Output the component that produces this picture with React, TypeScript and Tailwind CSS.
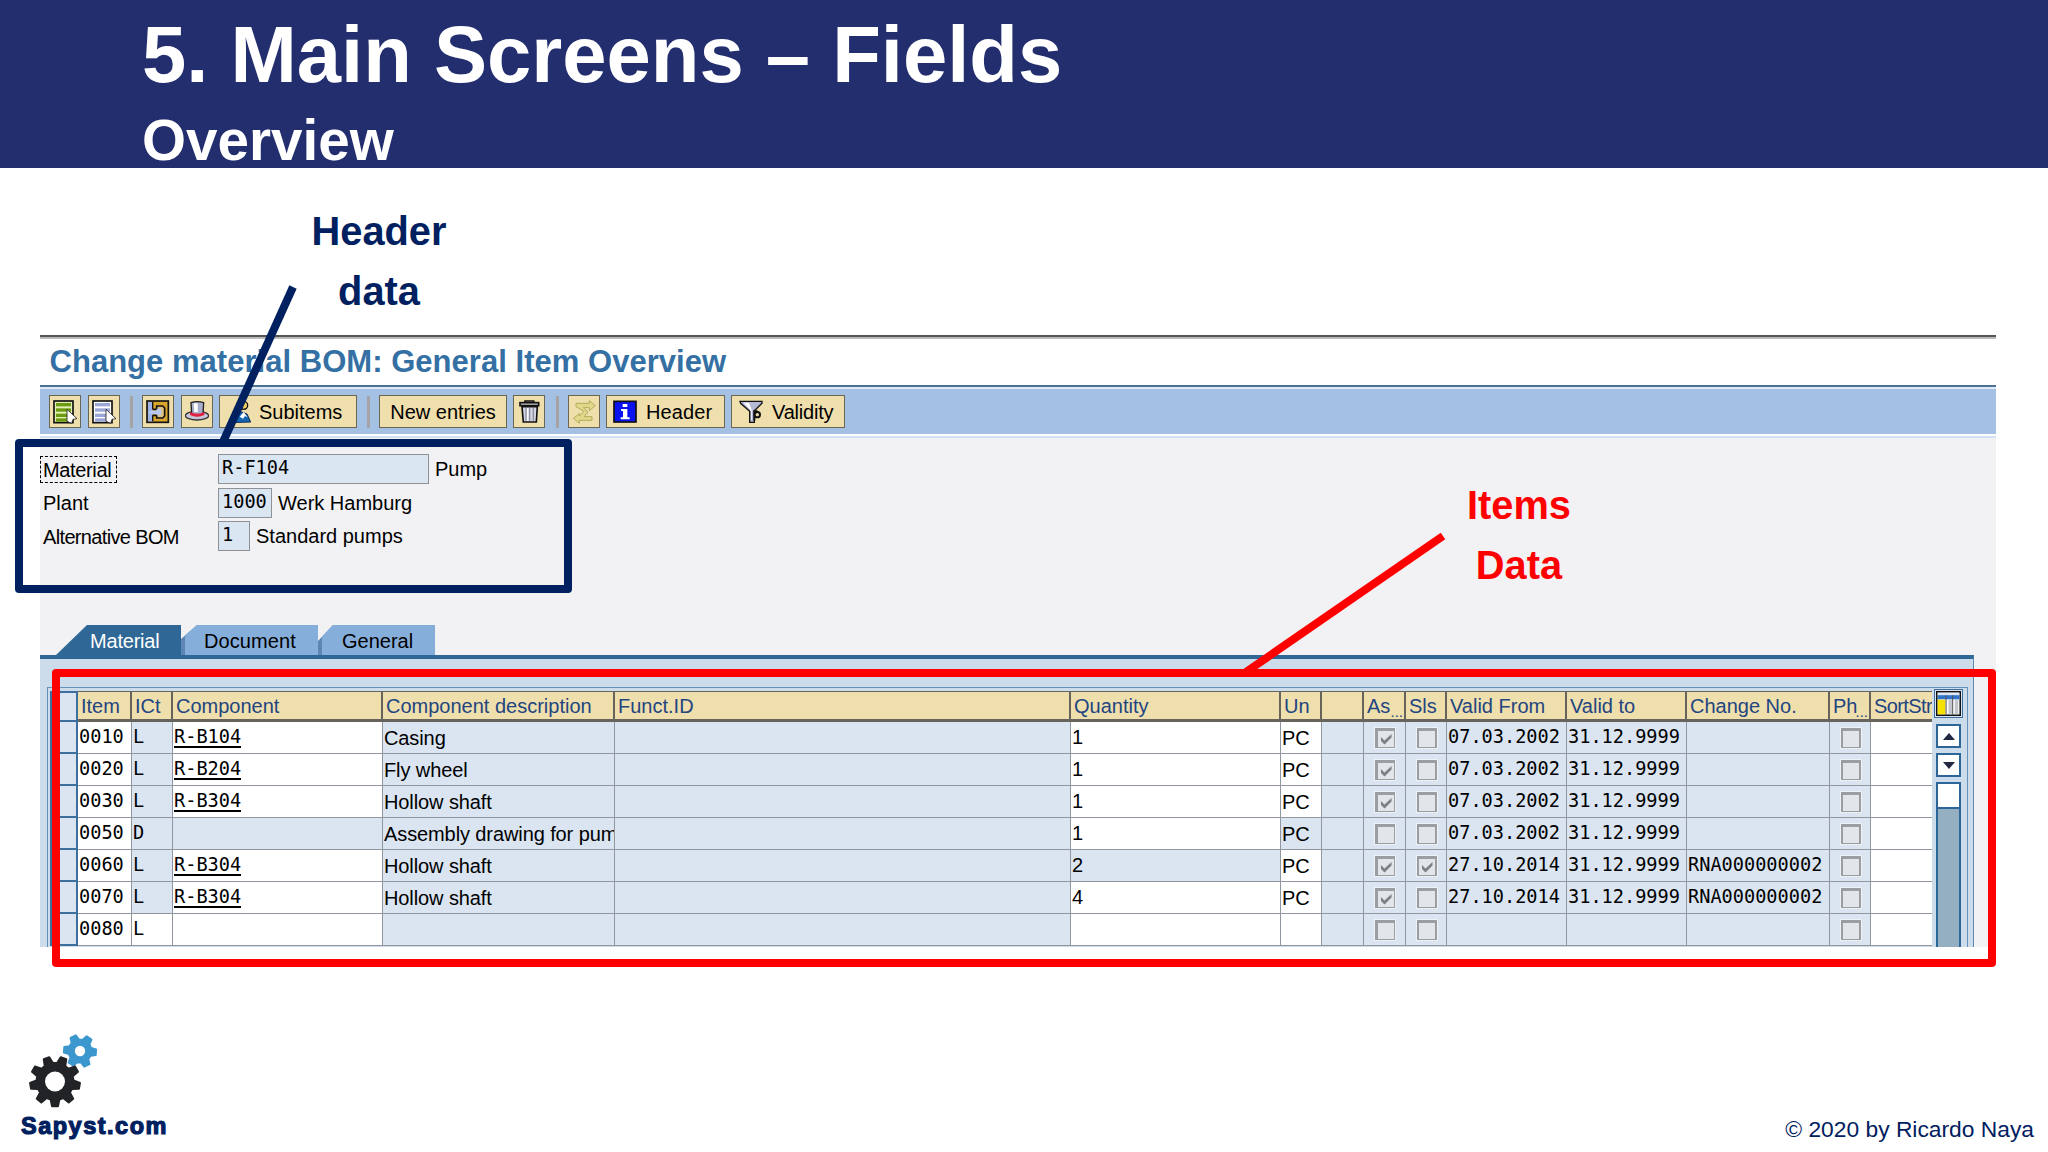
import type { ReactNode } from "react";
import clsx from "clsx";

type Row = {
    item: string;
    ict: string;
    component?: string;
    description?: string;
    quantity?: string;
    unit?: string;
    asm?: boolean;
    sls?: boolean;
    from?: string;
    to?: string;
    change?: string;
};

const ROWS: Row[] = [
    { item: "0010", ict: "L", component: "R-B104", description: "Casing", quantity: "1", unit: "PC", asm: true, from: "07.03.2002", to: "31.12.9999" },
    { item: "0020", ict: "L", component: "R-B204", description: "Fly wheel", quantity: "1", unit: "PC", asm: true, from: "07.03.2002", to: "31.12.9999" },
    { item: "0030", ict: "L", component: "R-B304", description: "Hollow shaft", quantity: "1", unit: "PC", asm: true, from: "07.03.2002", to: "31.12.9999" },
    { item: "0050", ict: "D", description: "Assembly drawing for pum", quantity: "1", unit: "PC", from: "07.03.2002", to: "31.12.9999" },
    { item: "0060", ict: "L", component: "R-B304", description: "Hollow shaft", quantity: "2", unit: "PC", asm: true, sls: true, from: "27.10.2014", to: "31.12.9999", change: "RNA000000002" },
    { item: "0070", ict: "L", component: "R-B304", description: "Hollow shaft", quantity: "4", unit: "PC", asm: true, from: "27.10.2014", to: "31.12.9999", change: "RNA000000002" },
    { item: "0080", ict: "L" },
];

const HEADERS = ["Item", "ICt", "Component", "Component description", "Funct.ID", "Quantity", "Un", "", "As", "Sls", "Valid From", "Valid to", "Change No.", "Ph", "SortStr"];

const COLS = "grid grid-cols-[28px_54px_41px_210px_232px_456px_210px_41px_42px_42px_41px_120px_120px_143px_41px_61px]";
const MONO = "font-['DejaVu_Sans_Mono',monospace] text-[18.6px]";
const MONO_CELL = "font-['DejaVu_Sans_Mono',monospace] text-[18.6px] leading-[30px]";

/* ---------- toolbar icons ---------- */

function Icon({ children }: { children: ReactNode }) {
    return (
        <svg viewBox="0 0 72 72" className="w-6 h-6 shrink-0">
            {children}
        </svg>
    );
}

function ListIcon({ bar, bg }: { bar: string; bg: string }) {
    return (
        <Icon>
            <rect x="3" y="3" width="57" height="65" fill={bg} stroke="#111" strokeWidth="5" />
            {[9, 25, 41, 55].map(y => <rect key={y} x="9" y={y} width="45" height="10" fill={bar} />)}
            <path d="M42 28 L72 56 L60 58 L56 70 L42 64 Z" fill="#fff" stroke="#222" strokeWidth="2.5" />
        </Icon>
    );
}

function DetailIcon() {
    return (
        <Icon>
            <rect x="3" y="3" width="64" height="64" fill="#d8a42c" stroke="#111" strokeWidth="5" />
            <path d="M6 6 H20 V64 H6 Z" fill="#9db4e6" />
            <path d="M20 28 H32 V18 H50 L56 24 V48 L50 54 H32 V46 H20" fill="#dfc27a" stroke="#111" strokeWidth="5" />
            <path d="M10 32 H32 V26 H46 V46 H32 V42 H10 Z" fill="#b9c8ee" />
            <path d="M20 6 V28 M20 46 V64" stroke="#111" strokeWidth="4" />
        </Icon>
    );
}

function HatIcon() {
    return (
        <Icon>
            <ellipse cx="36" cy="47" rx="35" ry="13" fill="#c7c7dc" stroke="#333" strokeWidth="4" />
            <path d="M18 8 Q36 2 56 8 L54 42 Q36 52 20 42 Z" fill="#aab0cc" stroke="#222" strokeWidth="4" />
            <path d="M26 10 H38 V36 H28 Z" fill="#fff" />
            <path d="M15 36 Q36 46 59 36 L58 45 Q36 56 15 45 Z" fill="#e0203c" />
        </Icon>
    );
}

function PersonIcon() {
    return (
        <Icon>
            <circle cx="50" cy="16" r="12" fill="#f2d060" stroke="#111" strokeWidth="4" />
            <path d="M4 68 L30 42 L44 36 L60 42 L71 66 Z" fill="#1565b0" stroke="#0d2a55" strokeWidth="3" />
            <path d="M38 50 L50 36 L62 52 L54 48 L48 56 Z" fill="#fff" />
        </Icon>
    );
}

function TrashIcon() {
    return (
        <Icon>
            <path d="M24 9 V3 H50 V9" fill="none" stroke="#111" strokeWidth="5" />
            <rect x="9" y="8" width="56" height="9" fill="#bbb" stroke="#111" strokeWidth="5" />
            <path d="M15 20 H61 L58 66 H19 Z" fill="#d4d6e4" stroke="#111" strokeWidth="5" />
            <path d="M27 24 V62 M38 24 V62 M49 24 V62" stroke="#8c8ca0" strokeWidth="4" />
            <path d="M32 24 V62" stroke="#fff" strokeWidth="4" />
        </Icon>
    );
}

function SwapIcon() {
    return (
        <Icon>
            <path d="M12 10 H52 V2 L70 17 L52 32 V23 H34 L48 36 L36 50 H60 V61 H22 V70 L4 55 L22 41 V48 L36 34 L12 20 Z" fill="#e2d88a" stroke="#b5ab5c" strokeWidth="3" />
        </Icon>
    );
}

function InfoIcon() {
    return (
        <Icon>
            <rect x="3" y="4" width="66" height="62" fill="#0b12f0" stroke="#111" strokeWidth="5" />
            <path d="M29 12 H43 V21 H29 Z M24 27 H43 V52 H50 V58 H23 V52 H30 V33 H24 Z" fill="#fff" />
        </Icon>
    );
}

function FilterIcon() {
    return (
        <Icon>
            <path d="M3 4 H69 V10 L46 32 V67 H32 V34 L5 10 Z" fill="#b5b9d6" stroke="#111" strokeWidth="4" />
            <path d="M14 8 H30 L38 30 V60 H36 V32 Z" fill="#fff" />
            <path d="M46 62 V34 H56" fill="none" stroke="#111" strokeWidth="6" />
            <circle cx="55" cy="44" r="8" fill="#e9d9a4" stroke="#111" strokeWidth="6" />
        </Icon>
    );
}

function LayoutIcon() {
    return (
        <svg viewBox="0 0 72 72" className="w-[25px] h-[25px]">
            <rect x="2" y="2" width="68" height="68" fill="#fff" stroke="#111" strokeWidth="5" />
            <rect x="5" y="5" width="62" height="7" fill="#dfe9f5" />
            <rect x="5" y="12" width="62" height="12" fill="#2f74c8" />
            <rect x="5" y="25" width="22" height="42" fill="#f5e100" />
            <rect x="36" y="25" width="10" height="42" fill="#c2c5cc" />
            <rect x="54" y="25" width="10" height="42" fill="#c2c5cc" />
            <path d="M29 12 V68 M48 12 V68" stroke="#555" strokeWidth="3" />
        </svg>
    );
}

/* ---------- toolbar ---------- */

function ToolButton({ className, children }: { className: string; children: ReactNode }) {
    return (
        <button className={clsx("h-[33px] shrink-0 flex items-center bg-[#efdfac] border border-[#6b6554] text-xl leading-none whitespace-nowrap", className)}>
            {children}
        </button>
    );
}

function Separator({ className }: { className: string }) {
    return <div className={clsx("w-[3px] h-8 shrink-0 bg-[#a5a3a5]", className)} />;
}

function Toolbar() {
    return (
        <div className="h-[45px] bg-[#a4c0e3] flex items-center pl-[9px]">
            <ToolButton className="w-8 justify-center"><ListIcon bar="#6c9a10" bg="#e3efb4" /></ToolButton>
            <ToolButton className="w-8 justify-center ml-[7px]"><ListIcon bar="#9aa6d6" bg="#fff" /></ToolButton>
            <Separator className="ml-[10px]" />
            <ToolButton className="w-8 justify-center ml-[9px]"><DetailIcon /></ToolButton>
            <ToolButton className="w-8 justify-center ml-[7px]"><HatIcon /></ToolButton>
            <ToolButton className="w-[138px] ml-[6px] pl-[7px] gap-[8px]"><PersonIcon />Subitems</ToolButton>
            <Separator className="ml-[10px]" />
            <ToolButton className="w-32 ml-[9px] justify-center">New entries</ToolButton>
            <ToolButton className="w-8 justify-center ml-[6px]"><TrashIcon /></ToolButton>
            <Separator className="ml-[11px]" />
            <ToolButton className="w-8 justify-center ml-[9px]"><SwapIcon /></ToolButton>
            <ToolButton className="w-[119px] ml-[6px] pl-[6px] gap-[9px] tracking-[0.1px]"><InfoIcon />Header</ToolButton>
            <ToolButton className="w-[114px] ml-[6px] pl-[7px] gap-[9px] tracking-[-0.2px]"><FilterIcon />Validity</ToolButton>
        </div>
    );
}

/* ---------- header fields ---------- */

function Field({ label, focused, value, width, text }: { label: string; focused?: boolean; value: string; width: string; text: string }) {
    return (
        <div className="flex items-start h-[33.5px]">
            <div className="w-[178px] shrink-0">
                <span className={clsx("inline-block h-[27px] mt-[1.5px] pl-[2px] pr-[5px] leading-[26px] whitespace-nowrap border border-dashed", focused ? "border-black tracking-[-0.35px]" : "border-transparent", label.length > 10 ? "tracking-[-0.65px]" : "")}>{label}</span>
            </div>
            <div className={clsx("h-[30px] shrink-0 bg-[#dbe6f3] border-[1.5px] border-[#8e9196] pl-[3px] leading-[26px]", MONO, width)}>{value}</div>
            <span className="ml-[6px] leading-[31px]">{text}</span>
        </div>
    );
}

/* ---------- tabs ---------- */

function Tabs() {
    return (
        <div className="flex h-[30px] pl-4 text-xl leading-[32px]">
            <div className="w-[125px] pl-[34px] bg-[#2f6896] text-white tracking-[-0.2px] [clip-path:polygon(0_100%,31px_0,100%_0,100%_100%)]">Material</div>
            <div className="flex w-[137px] bg-[#5d86b4] [clip-path:polygon(0_14px,16px_0,100%_0,100%_100%,0_100%)]">
                <div className="w-[133px] ml-1 pl-[19px] bg-[#86aedb] tracking-[0.1px]">Document</div>
            </div>
            <div className="flex w-[117px] bg-[#5d86b4] [clip-path:polygon(0_16px,15px_0,100%_0,100%_100%,0_100%)]">
                <div className="w-[113px] ml-1 pl-5 bg-[#86aedb]">General</div>
            </div>
        </div>
    );
}

/* ---------- items table ---------- */

function Check({ checked }: { checked?: boolean }) {
    return (
        <div className="w-[22px] h-[22px] mt-[5px] mx-auto border border-[#eef2f6] bg-[#9b9ea0] pl-[2.5px] pt-[2.5px] pr-[1.5px] pb-[1.5px]">
            <div className="w-full h-full bg-[#e2e6ea]">
                {checked && (
                    <svg viewBox="0 0 16 16" className="w-full h-full">
                        <path d="M3 6 L6.5 9.5 L13.5 3 V6.5 L6.5 13.5 L3 10 Z" fill="#7d8184" />
                    </svg>
                )}
            </div>
        </div>
    );
}

function Cell({ white, className, children }: { white?: boolean; className?: string; children?: ReactNode }) {
    return (
        <div className={clsx("h-8 overflow-hidden whitespace-nowrap border-r border-b border-[#91979f] pl-[1px]", white ? "bg-white" : "bg-[#dae5f1]", className)}>
            {children}
        </div>
    );
}

function TableRow({ row }: { row: Row }) {
    const last = row.item === "0080";
    return (
        <div className={COLS}>
            <div className="h-8 bg-[#dae5f1] border-x-2 border-b-2 border-[#3c6f9d]" />
            <Cell white className={MONO_CELL}>{row.item}</Cell>
            <Cell white={last} className={MONO_CELL}>{row.ict}</Cell>
            <Cell white={last || !!row.component} className={MONO_CELL}>
                {row.component && <div className="w-fit h-[26px] border-b-2 border-black">{row.component}</div>}
            </Cell>
            <Cell className="leading-[33px] tracking-[-0.1px]">{row.description}</Cell>
            <Cell />
            <Cell white={row.item !== "0060"} className="leading-[31px]">{row.quantity}</Cell>
            <Cell white={row.item !== "0050"} className="leading-[33px]">{row.unit}</Cell>
            <Cell />
            <Cell><Check checked={row.asm} /></Cell>
            <Cell><Check checked={row.sls} /></Cell>
            <Cell className={MONO_CELL}>{row.from}</Cell>
            <Cell className={MONO_CELL}>{row.to}</Cell>
            <Cell className={MONO_CELL}>{row.change}</Cell>
            <Cell><Check /></Cell>
            <Cell white className="border-r-0" />
        </div>
    );
}

function ItemsTable() {
    return (
        <div className="w-[1882px] shrink-0">
            <div className={COLS}>
                <div className="h-[31px] bg-[#dae5f1] border-2 border-[#3c6f9d]" />
                {HEADERS.map((h, i) => (
                    <div key={i} className={clsx("relative h-[31px] bg-[#efdfac] border-t-[1.5px] border-b-[3px] border-[#66645c] pl-[3px] leading-[28px] text-[#234581] overflow-hidden whitespace-nowrap", i < 14 ? "border-r-[2.5px]" : "tracking-[-0.6px]")}>
                        {h}
                        {(h === "As" || h === "Ph") && <span className="absolute right-[1px] bottom-[-1px] text-[15px] leading-4">...</span>}
                    </div>
                ))}
            </div>
            {ROWS.map(row => <TableRow key={row.item} row={row} />)}
        </div>
    );
}

function ScrollBar() {
    return (
        <div className="w-[29px] ml-[2px] -mt-[2px] shrink-0 flex flex-col items-center">
            <div className="w-[29px] h-[29px] border-[1.5px] border-[#3c6f9d] bg-[#dae5f1] flex items-center justify-center"><LayoutIcon /></div>
            <div className="w-[25px] h-6 mt-[6px] border-2 border-[#2c6598] bg-white flex items-center justify-center">
                <svg viewBox="0 0 12 7" className="w-3 h-[7px]"><path d="M0 7 L6 0 L12 7 Z" fill="#222840" /></svg>
            </div>
            <div className="w-[25px] h-6 mt-[5px] border-2 border-[#2c6598] bg-white flex items-center justify-center">
                <svg viewBox="0 0 12 7" className="w-3 h-[7px]"><path d="M0 0 L6 7 L12 0 Z" fill="#222840" /></svg>
            </div>
            <div className="w-[25px] flex-1 mt-[5px] border-2 border-b-0 border-[#2c6598] bg-[#94afc2]">
                <div className="h-[25px] bg-white border-b-2 border-[#2c6598]" />
            </div>
        </div>
    );
}

/* ---------- logo ---------- */

function gear(cx: number, cy: number, teeth: number, outer: number, root: number, start: number) {
    const pts: string[] = [];
    const step = (Math.PI * 2) / teeth;
    for (let i = 0; i < teeth; i++) {
        const a = start + i * step;
        [[-0.34, root], [-0.17, outer], [0.17, outer], [0.34, root]].forEach(([k, r]) => {
            pts.push(`${(cx + Math.cos(a + k * step) * r).toFixed(2)},${(cy + Math.sin(a + k * step) * r).toFixed(2)}`);
        });
    }
    return pts.join(" ");
}

function Logo() {
    return (
        <div className="w-[160px]">
            <svg viewBox="0 0 80 80" className="w-20 h-20 block ml-[5px]">
                <polygon points={gear(55, 21, 6, 16.2, 11.5, 0.08)} fill="#3d97cf" stroke="#3d97cf" strokeWidth="2" strokeLinejoin="round" />
                <circle cx="55" cy="21" r="5.2" fill="#fff" />
                <polygon points={gear(30, 51.5, 9, 25, 18.5, Math.PI / 2)} fill="#222326" stroke="#222326" strokeWidth="2" strokeLinejoin="round" />
                <circle cx="30" cy="51.5" r="10" fill="#fff" />
            </svg>
            <div className="mt-[2px] ml-[1px] text-[23.5px] leading-7 font-bold tracking-[1.5px] text-[#002060] [-webkit-text-stroke:1.2px_#002060]">Sapyst.com</div>
        </div>
    );
}

export default function App() {
    return (
        <div className="relative w-[2048px] h-[1152px] overflow-hidden bg-white flex flex-col font-['Liberation_Sans',Arial,sans-serif] text-black">
            <header className="h-[168px] shrink-0 bg-[#232e6f] pl-[142px] pt-[7px] text-white font-bold">
                <h1 className="text-[79.6px] leading-[96px]">5. Main Screens – Fields</h1>
                <h2 className="text-[56.6px] leading-[64px] mt-[6px]">Overview</h2>
            </header>

            <main className="mt-[167px] ml-10 w-[1956px] h-[612px] shrink-0 flex flex-col bg-[#f2f1f3] text-xl">
                <div className="h-[52px] shrink-0 bg-white border-t-2 border-[#555] border-b-2 border-b-[#4b7294]">
                    <div className="border-t-2 border-[#bbb] pl-[9.5px] text-[31px] leading-[46px] font-bold tracking-[0.03px] text-[#3470a3]">Change material BOM: General Item Overview</div>
                </div>
                <div className="h-[2px] shrink-0 bg-[#dfeaf6]" />
                <Toolbar />
                <div className="h-1 shrink-0 bg-[#d3e2f2] border-t-2 border-white" />

                <section className="h-[187px] shrink-0 pt-4">
                    <Field label="Material" focused value="R-F104" width="w-[211px]" text="Pump" />
                    <Field label="Plant" value="1000" width="w-[54px]" text="Werk Hamburg" />
                    <Field label="Alternative BOM" value="1" width="w-8" text="Standard pumps" />
                </section>

                <Tabs />
                <div className="w-[1934px] flex-1 bg-[#ccdcea] border-t-4 border-[#2f6896] border-r-[1.5px] border-r-[#5b8ab5] pl-[7px] pt-[28px]">
                    <div className="w-[1921px] h-[260px] flex border-[1.5px] border-b-0 border-[#6690b8] pl-[2px] pt-[3px]">
                        <ItemsTable />
                        <ScrollBar />
                    </div>
                </div>
            </main>

            <footer className="flex flex-1 justify-between items-start pl-5 pr-[14px] pt-[83px]">
                <Logo />
                <div className="mt-[85px] text-[22.8px] leading-7 text-[#002060]">© 2020 by Ricardo Naya</div>
            </footer>

            {/* callouts over the screen */}
            <div className="absolute left-[300px] top-[201px] w-[158px] text-center font-bold text-[39.8px] leading-[60px] text-[#002060]">Header<br />data</div>
            <div className="absolute left-[1440px] top-[475px] w-[158px] text-center font-bold text-[39.8px] leading-[60px] text-[#ff0000]">Items<br />Data</div>
            <div className="absolute left-[15px] top-[439px] w-[557px] h-[154px] border-8 border-[#002060] rounded-[4px]" />
            <div className="absolute left-[52px] top-[669px] w-[1944px] h-[298px] border-8 border-[#ff0000] rounded-[4px]" />
            <svg viewBox="0 0 2048 1152" className="absolute inset-0 w-full h-full pointer-events-none">
                <path d="M293 287 L223 442" stroke="#002060" strokeWidth="8" />
                <path d="M1443 536 L1246 672" stroke="#ff0000" strokeWidth="8" />
            </svg>
        </div>
    );
}
